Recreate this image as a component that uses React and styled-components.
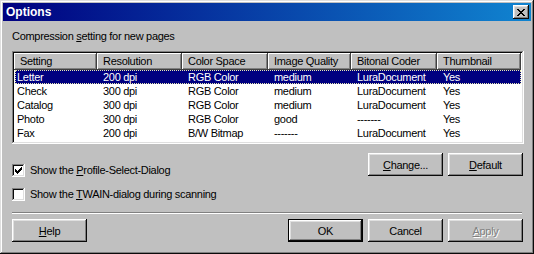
import React from 'react'
import styled, { createGlobalStyle } from 'styled-components'

const GlobalStyle = createGlobalStyle`
    html, body {
        margin: 0;
        padding: 0;
        background: #c0c0c0;
    }
    body {
        font-family: "Liberation Sans", Arial, sans-serif;
        font-size: 11px;
        letter-spacing: -0.3px;
        color: #000;
    }
`

const columns = [
    { title: 'Setting', width: 83 },
    { title: 'Resolution', width: 85 },
    { title: 'Color Space', width: 86 },
    { title: 'Image Quality', width: 83 },
    { title: 'Bitonal Coder', width: 86 },
    { title: 'Thumbnail', width: 84 },
]

const rows = [
    ['Letter', '200 dpi', 'RGB Color', 'medium', 'LuraDocument', 'Yes'],
    ['Check', '300 dpi', 'RGB Color', 'medium', 'LuraDocument', 'Yes'],
    ['Catalog', '300 dpi', 'RGB Color', 'medium', 'LuraDocument', 'Yes'],
    ['Photo', '300 dpi', 'RGB Color', 'good', '-------', 'Yes'],
    ['Fax', '200 dpi', 'B/W Bitmap', '-------', 'LuraDocument', 'Yes'],
]

const CloseIcon = () => (
    <svg width="8" height="7" viewBox="0 0 8 7" shapeRendering="crispEdges">
        <path
            d="M0 0h2v1h-2zM6 0h2v1h-2zM1 1h2v1h-2zM5 1h2v1h-2zM2 2h4v1h-4zM3 3h2v1h-2zM2 4h4v1h-4zM1 5h2v1h-2zM5 5h2v1h-2zM0 6h2v1h-2zM6 6h2v1h-2z"
            fill="#000"
        />
    </svg>
)

const CheckMark = () => (
    <svg width="7" height="7" viewBox="0 0 7 7" shapeRendering="crispEdges">
        <path d="M6 0h1v3h-1zM5 1h1v3h-1zM4 2h1v3h-1zM3 3h1v3h-1zM2 4h1v3h-1zM1 3h1v3h-1zM0 2h1v3h-1z" fill="#000" />
    </svg>
)

const Checkbox = ({ checked, children }) => (
    <CheckRow>
        <Box>{checked && <CheckMark />}</Box>
        <span>{children}</span>
    </CheckRow>
)

const App = () => {
    return (
        <>
            <GlobalStyle />
            <Window>
                <TitleBar>
                    <Title>Options</Title>
                    <CloseButton>
                        <CloseIcon />
                    </CloseButton>
                </TitleBar>
                <Body>
                    <Label>
                        Compression <u>s</u>etting for new pages
                    </Label>
                    <ListView>
                        <HeaderRow>
                            {columns.map((c) => (
                                <HeaderCell key={c.title} style={{ width: c.width }}>
                                    {c.title}
                                </HeaderCell>
                            ))}
                        </HeaderRow>
                        {rows.map((r, i) => (
                            <DataRow key={r[0]} $selected={i === 0}>
                                {r.map((v, j) => (
                                    <DataCell key={j} $first={j === 0} style={{ width: columns[j].width - (j === 0 ? 1 : 0) }}>
                                        {v}
                                    </DataCell>
                                ))}
                            </DataRow>
                        ))}
                    </ListView>
                    <OptionsRow>
                        <Checks>
                            <Checkbox checked>
                                Show the <u>P</u>rofile-Select-Dialog
                            </Checkbox>
                            <Checkbox>
                                Show the <u>T</u>WAIN-dialog during scanning
                            </Checkbox>
                        </Checks>
                        <ButtonGroup $top={9}>
                            <Button>
                                <u>C</u>hange...
                            </Button>
                            <Button>
                                <u>D</u>efault
                            </Button>
                        </ButtonGroup>
                    </OptionsRow>
                    <Separator />
                    <Footer>
                        <Button>
                            <u>H</u>elp
                        </Button>
                        <ButtonGroup>
                            <Button $default>OK</Button>
                            <Button>Cancel</Button>
                            <Button $disabled>
                                <u>A</u>pply
                            </Button>
                        </ButtonGroup>
                    </Footer>
                </Body>
            </Window>
        </>
    )
}

const Window = styled.div`
    box-sizing: border-box;
    width: 534px;
    height: 254px;
    padding: 3px;
    background: #c0c0c0;
    box-shadow: inset -1px -1px #0a0a0a, inset 1px 1px #dfdfdf, inset -2px -2px #808080, inset 2px 2px #fff;
    display: flex;
    flex-direction: column;
`
const TitleBar = styled.div`
    height: 18px;
    display: flex;
    align-items: center;
    justify-content: space-between;
    padding: 0 2px 0 3px;
    background: linear-gradient(90deg, #000080, #1084d0);
`
const Title = styled.div`
    color: #fff;
    font-weight: bold;
    font-size: 12px;
    letter-spacing: 0;
`
const CloseButton = styled.div`
    width: 16px;
    height: 14px;
    display: flex;
    align-items: center;
    justify-content: center;
    background: #c0c0c0;
    box-shadow: inset -1px -1px #0a0a0a, inset 1px 1px #fff, inset -2px -2px #808080, inset 2px 2px #dfdfdf;
`
const Body = styled.div`
    display: flex;
    flex-direction: column;
    padding: 8px 7px 0 9px;
`
const Label = styled.div`
    height: 14px;
    line-height: 14px;
    margin-bottom: 8px;
`
const ListView = styled.div`
    box-sizing: border-box;
    height: 93px;
    padding: 2px;
    background: #fff;
    box-shadow: inset -1px -1px #fff, inset 1px 1px #808080, inset -2px -2px #dfdfdf, inset 2px 2px #0a0a0a;
`
const HeaderRow = styled.div`
    display: flex;
    height: 17px;
`
const HeaderCell = styled.div`
    box-sizing: border-box;
    padding-left: 6px;
    line-height: 17px;
    background: #c0c0c0;
    white-space: nowrap;
    box-shadow: inset -1px -1px #404040, inset 1px 1px #fff, inset -2px -2px #808080;
`
const DataRow = styled.div`
    display: flex;
    width: 506px;
    height: 14px;
    margin-left: 1px;
    box-sizing: border-box;
    background: ${(p) => (p.$selected ? '#000080' : 'transparent')};
    color: ${(p) => (p.$selected ? '#fff' : '#000')};
    outline: ${(p) => (p.$selected ? '1px dotted #e8e8b0' : 'none')};
    outline-offset: -1px;
`
const DataCell = styled.div`
    box-sizing: border-box;
    padding-left: ${(p) => (p.$first ? '2px' : '6px')};
    line-height: 14px;
    white-space: nowrap;
`
const OptionsRow = styled.div`
    display: flex;
    justify-content: space-between;
    align-items: flex-start;
    padding-right: 1px;
`
const Checks = styled.div`
    display: flex;
    flex-direction: column;
    gap: 10px;
    padding-top: 19px;
`
const CheckRow = styled.div`
    display: flex;
    align-items: center;
    gap: 5px;
    height: 14px;
`
const Box = styled.div`
    width: 13px;
    height: 13px;
    box-sizing: border-box;
    display: flex;
    align-items: center;
    justify-content: center;
    background: #fff;
    box-shadow: inset -1px -1px #fff, inset 1px 1px #808080, inset -2px -2px #dfdfdf, inset 2px 2px #0a0a0a;
`
const ButtonGroup = styled.div`
    display: flex;
    gap: 5px;
    padding-top: ${(p) => p.$top || 0}px;
`
const Button = styled.div`
    box-sizing: border-box;
    width: 75px;
    height: 23px;
    display: flex;
    align-items: center;
    justify-content: center;
    background: #c0c0c0;
    color: ${(p) => (p.$disabled ? '#808080' : '#000')};
    text-shadow: ${(p) => (p.$disabled ? '1px 1px #fff' : 'none')};
    border: ${(p) => (p.$default ? '1px solid #000' : 'none')};
    box-shadow: inset -1px -1px #0a0a0a, inset 1px 1px #fff, inset -2px -2px #808080, inset 2px 2px #dfdfdf;
`
const Separator = styled.div`
    height: 1px;
    margin-top: 11px;
    margin-right: 2px;
    background: #808080;
    border-bottom: 1px solid #fff;
`
const Footer = styled.div`
    display: flex;
    justify-content: space-between;
    padding-right: 1px;
    margin-top: 5px;
`

export default App
